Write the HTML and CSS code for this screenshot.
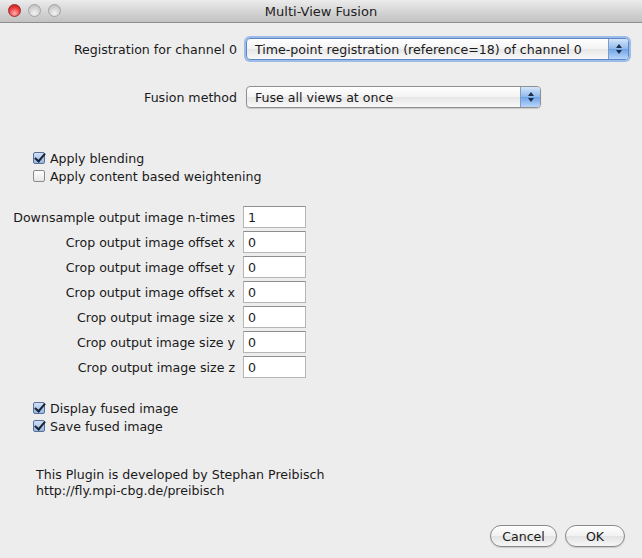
FILE: index.html
```html
<!DOCTYPE html>
<html>
<head>
    <title>Multi-View Fusion</title>
    <link rel="stylesheet" href="styles.css">
</head>
<body>
    <div class="window">
        <div class="titlebar">
            <div class="lights">
                <span class="light close"></span>
                <span class="light"></span>
                <span class="light"></span>
            </div>
            <div class="title">Multi-View Fusion</div>
        </div>

        <div class="content">
            <div class="choices">
                <label class="label">Registration for channel 0</label>
                <div class="select focused">
                    <span class="select-text">Time-point registration (reference=18) of channel 0</span>
                    <span class="select-arrow"><span class="up"></span><span class="down"></span></span>
                </div>
                <label class="label second">Fusion method</label>
                <div class="select short second">
                    <span class="select-text">Fuse all views at once</span>
                    <span class="select-arrow"><span class="up"></span><span class="down"></span></span>
                </div>
            </div>

            <div class="checks first-checks">
                <div class="check"><span class="box checked"></span>Apply blending</div>
                <div class="check"><span class="box"></span>Apply content based weightening</div>
            </div>

            <div class="fields">
                <label class="label">Downsample output image n-times</label><div class="field">1</div>
                <label class="label">Crop output image offset x</label><div class="field">0</div>
                <label class="label">Crop output image offset y</label><div class="field">0</div>
                <label class="label">Crop output image offset x</label><div class="field">0</div>
                <label class="label">Crop output image size x</label><div class="field">0</div>
                <label class="label">Crop output image size y</label><div class="field">0</div>
                <label class="label">Crop output image size z</label><div class="field">0</div>
            </div>

            <div class="checks second-checks">
                <div class="check"><span class="box checked"></span>Display fused image</div>
                <div class="check"><span class="box checked"></span>Save fused image</div>
            </div>

            <div class="about">
                <div>This Plugin is developed by Stephan Preibisch</div>
                <div>http://fly.mpi-cbg.de/preibisch</div>
            </div>

            <div class="buttons">
                <button class="btn cancel">Cancel</button>
                <button class="btn ok">OK</button>
            </div>
        </div>
    </div>
</body>
</html>
```

FILE: styles.css
```css
* {
    margin: 0;
    padding: 0;
    box-sizing: border-box;
}

body {
    width: 642px;
    height: 558px;
    overflow: hidden;
    background: #ededed;
    font-family: 'DejaVu Sans', 'Lucida Grande', sans-serif;
    font-size: 12.6px;
    color: #1a1a1a;
}

.window {
    width: 642px;
    height: 558px;
    background: #ededed;
}

.titlebar {
    position: relative;
    height: 23px;
    background: linear-gradient(#ececec, #d6d6d6 50%, #c2c2c2);
    border-bottom: 1px solid #8d8d8d;
    display: flex;
    align-items: center;
    justify-content: center;
}

.title {
    font-size: 13px;
    color: #222;
    padding-top: 1px;
}

.lights {
    position: absolute;
    left: 8px;
    top: 4px;
    display: flex;
    gap: 7px;
}

.light {
    width: 13px;
    height: 13px;
    border-radius: 50%;
    border: 1px solid #a3a3a3;
    background: radial-gradient(circle at 50% 75%, #f2f2f2, #cfcfcf 60%, #b9b9b9);
}

.light.close {
    border-color: #9c2a2a;
    background: radial-gradient(circle at 50% 75%, #ffb0b0, #ec3d3d 55%, #b51515);
}

.content {
    padding: 15px 0 0 0;
}

.label {
    text-align: right;
    white-space: nowrap;
}

.choices {
    display: grid;
    grid-template-columns: 237px auto;
    column-gap: 9px;
    align-items: center;
}

.choices .label {
    justify-self: end;
}

.choices .select {
    justify-self: start;
}

.choices .second {
    margin-top: 26px;
}

.select {
    position: relative;
    width: 383px;
    height: 22px;
    border: 1px solid #8f8f8f;
    border-radius: 4px;
    background: linear-gradient(#ffffff, #f3f3f3 50%, #e6e6e6 51%, #f9f9f9);
    display: flex;
    align-items: center;
    box-shadow: 0 1px 1px rgba(0, 0, 0, 0.15);
}

.select.focused {
    border-color: #5f87c6;
    box-shadow: 0 0 0 2px #9bbbe8;
}

.select.short {
    width: 295px;
}

.select-text {
    flex: 1;
    padding-left: 8px;
    white-space: nowrap;
    overflow: hidden;
}

.select-arrow {
    width: 20px;
    height: 20px;
    border-left: 1px solid #7f9cc9;
    border-radius: 0 3px 3px 0;
    background: linear-gradient(#d4e5fa, #8db8ec 50%, #6fa3e6 51%, #b7d6fb);
    display: flex;
    flex-direction: column;
    align-items: center;
    justify-content: center;
    gap: 2px;
}

.up, .down {
    width: 0;
    height: 0;
    border-left: 3px solid transparent;
    border-right: 3px solid transparent;
}

.up {
    border-bottom: 4px solid #1e2c44;
}

.down {
    border-top: 4px solid #1e2c44;
}

.checks {
    padding-left: 33px;
}

.first-checks {
    margin-top: 41px;
}

.second-checks {
    margin-top: 21px;
}

.check {
    display: flex;
    align-items: center;
    height: 18px;
}

.box {
    width: 12px;
    height: 12px;
    margin-right: 5px;
    border: 1px solid #8a8a8a;
    border-radius: 2px;
    background: linear-gradient(#ffffff, #e6e6e6);
    position: relative;
}

.box.checked {
    border-color: #5a7096;
    background: linear-gradient(#cfe0f7, #95b9e6);
}

.box.checked::after {
    content: "";
    position: absolute;
    left: 3px;
    top: -2px;
    width: 4px;
    height: 9px;
    border-right: 2px solid #1c2433;
    border-bottom: 2px solid #1c2433;
    transform: rotate(40deg);
}

.fields {
    margin-top: 21px;
    display: grid;
    grid-template-columns: 235px 63px;
    column-gap: 8px;
    row-gap: 3px;
    align-items: center;
}

.field {
    height: 22px;
    border: 1px solid #b5b5b5;
    border-top-color: #8e8e8e;
    background: #fff;
    padding-left: 4px;
    line-height: 21px;
}

.about {
    margin-top: 32px;
    padding-left: 36px;
    line-height: 16px;
}

.buttons {
    margin-top: 26px;
    display: flex;
    justify-content: flex-end;
    gap: 8px;
    padding-right: 17px;
}

.btn {
    height: 22px;
    border: 1px solid #8a8a8a;
    border-radius: 11px;
    background: linear-gradient(#ffffff, #f1f1f1 50%, #e3e3e3 51%, #f6f6f6);
    font-family: 'DejaVu Sans', 'Lucida Grande', sans-serif;
    font-size: 12.6px;
    color: #1a1a1a;
    box-shadow: 0 1px 1px rgba(0, 0, 0, 0.15);
}

.btn.cancel {
    width: 67px;
}

.btn.ok {
    width: 60px;
}
```
